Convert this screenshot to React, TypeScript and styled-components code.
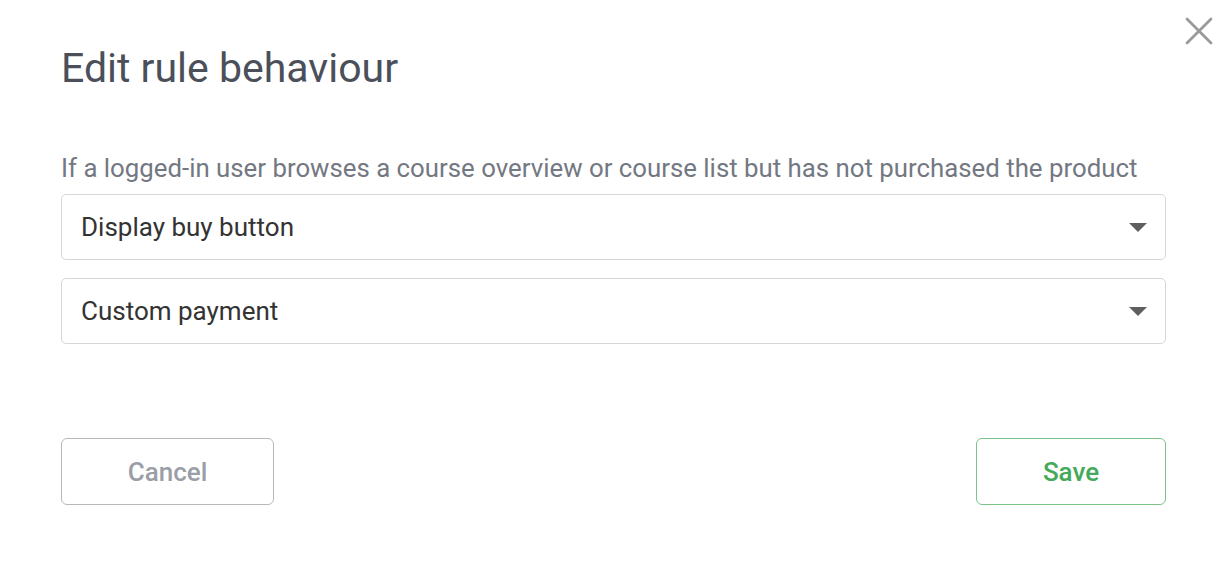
import React from 'react'
import styled, { createGlobalStyle } from 'styled-components'

const GlobalStyle = createGlobalStyle`
    html, body {
        margin: 0;
        padding: 0;
        background: #ffffff;
        font-family: Roboto, 'Liberation Sans', sans-serif;
    }
`

interface SelectProps {
    value: string
}

const Select: React.FC<SelectProps> = ({ value }) => {
    return (
        <SelectBox>
            <SelectValue>{value}</SelectValue>
            <Caret />
        </SelectBox>
    )
}

const App: React.FC = () => {
    return (
        <>
            <GlobalStyle />
            <Modal>
                <CloseButton aria-label="Close">
                    <svg width="28" height="28" viewBox="0 0 28 28">
                        <path d="M2 2 L26 26 M26 2 L2 26" stroke="#9a9a9a" strokeWidth="2.8" strokeLinecap="round" />
                    </svg>
                </CloseButton>

                <Title>Edit rule behaviour</Title>

                <Description>
                    If a logged-in user browses a course overview or course list but has not purchased the product
                </Description>

                <Fields>
                    <Select value="Display buy button" />
                    <Select value="Custom payment" />
                </Fields>

                <Actions>
                    <Button variant="cancel">Cancel</Button>
                    <Button variant="save">Save</Button>
                </Actions>
            </Modal>
        </>
    )
}

export default App

const Modal = styled.div`
    position: relative;
    width: 1230px;
    height: 562px;
    box-sizing: border-box;
    padding: 43px 64px 0 61px;
    background: #ffffff;
`

const CloseButton = styled.button`
    position: absolute;
    top: 17px;
    right: 17px;
    width: 28px;
    height: 28px;
    padding: 0;
    border: none;
    background: none;
    display: flex;
`

const Title = styled.h1`
    margin: 0;
    font-size: 41px;
    line-height: 50px;
    font-weight: 400;
    color: #4a4f59;
`

const Description = styled.p`
    margin: 59px 0 0;
    font-size: 25.8px;
    line-height: 32px;
    color: #737882;
    white-space: nowrap;
`

const Fields = styled.div`
    margin-top: 10px;
    display: flex;
    flex-direction: column;
    gap: 18px;
`

const SelectBox = styled.div`
    height: 66px;
    box-sizing: border-box;
    border: 1px solid #d6d6d6;
    border-radius: 5px;
    padding: 0 18px 0 19px;
    display: flex;
    align-items: center;
    justify-content: space-between;
`

const SelectValue = styled.span`
    font-size: 26px;
    color: #333333;
`

const Caret = styled.span`
    width: 0;
    height: 0;
    border-left: 9px solid transparent;
    border-right: 9px solid transparent;
    border-top: 9px solid #5f5f5f;
`

const Actions = styled.div`
    margin-top: 94px;
    display: flex;
    justify-content: space-between;
`

const Button = styled.button<{ variant: 'cancel' | 'save' }>`
    height: 67px;
    width: ${(p) => (p.variant === 'cancel' ? '213px' : '190px')};
    border-radius: 6px;
    background: #ffffff;
    font-family: Roboto, 'Liberation Sans', sans-serif;
    font-size: 26px;
    font-weight: 500;
    border: 1px solid ${(p) => (p.variant === 'cancel' ? '#b8b8b8' : '#7cc48a')};
    color: ${(p) => (p.variant === 'cancel' ? '#9a9ea6' : '#45a95a')};
`
